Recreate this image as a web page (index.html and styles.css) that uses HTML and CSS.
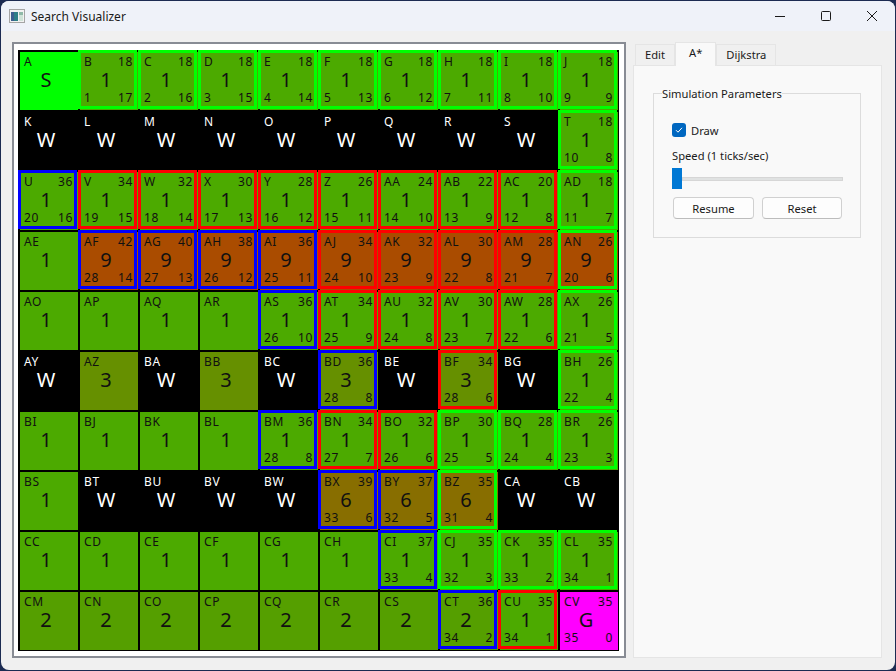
FILE: index.html
```html
<!DOCTYPE html>
<html lang="en">

<head>
    <meta charset="UTF-8">
    <meta name="viewport" content="width=device-width, initial-scale=1.0">
    <title>Search Visualizer</title>
    <link rel="stylesheet" href="styles.css">
</head>

<body>
    <div class="window">
        <div class="titlebar">
            <svg class="app-icon" width="16" height="14" viewBox="0 0 16 14">
                <rect x="0.5" y="0.5" width="15" height="13" fill="#f2f2f2" stroke="#a5a5a5" />
                <rect x="2" y="3" width="7" height="9" fill="#2f7f86" />
                <rect x="2" y="3" width="3" height="9" fill="#3c5f8f" />
                <rect x="10" y="3" width="4" height="9" fill="#cfe3d8" />
                <rect x="10" y="3" width="4" height="3" fill="#8fb9a8" />
            </svg>
            <span class="title">Search Visualizer</span>
            <div class="controls">
                <svg width="46" height="30" viewBox="0 0 46 30">
                    <path d="M18 15.5h10" stroke="#1a1a1a" fill="none" />
                </svg>
                <svg width="46" height="30" viewBox="0 0 46 30">
                    <rect x="18.5" y="10.5" width="9" height="9" rx="1" stroke="#1a1a1a" fill="none" />
                </svg>
                <svg width="46" height="30" viewBox="0 0 46 30">
                    <path d="M18 10l10 10M28 10l-10 10" stroke="#1a1a1a" fill="none" />
                </svg>
            </div>
        </div>

        <div class="content">
            <div class="board-frame">
                <div class="board" id="board">
                    <!-- Cells will be rendered here -->
                </div>
            </div>

            <div class="side">
                <div class="tabs">
                    <div class="tab">Edit</div>
                    <div class="tab active">A*</div>
                    <div class="tab">Dijkstra</div>
                </div>
                <div class="pane">
                    <div class="group">
                        <div class="group-title">Simulation Parameters</div>
                        <div class="check-row">
                            <svg class="check" width="14" height="14" viewBox="0 0 14 14">
                                <rect width="14" height="14" rx="3" fill="#0067c0" />
                                <path d="M4 7.2l2 2 4-4.4" stroke="#fff" fill="none" />
                            </svg>
                            <span>Draw</span>
                        </div>
                        <div class="speed">Speed (1 ticks/sec)</div>
                        <div class="slider">
                            <div class="handle"></div>
                            <div class="track"></div>
                        </div>
                        <div class="buttons">
                            <button class="btn resume">Resume</button>
                            <button class="btn reset">Reset</button>
                        </div>
                    </div>
                </div>
            </div>
        </div>
    </div>
    <script src="script.js"></script>
</body>

</html>
```

FILE: styles.css
```css
* {
    box-sizing: border-box;
    margin: 0;
    padding: 0;
}

body {
    width: 896px;
    height: 671px;
    padding: 1px;
    overflow: hidden;
    font-family: "Noto Sans", "Open Sans", sans-serif;
    font-size: 12px;
    color: #1a1a1a;
    background-color: #1c2b52;
}

.window {
    height: 669px;
    display: flex;
    flex-direction: column;
    border-radius: 8px;
    overflow: hidden;
    background-color: #f0f0f0;
}

/* Title bar */
.titlebar {
    height: 30px;
    flex: none;
    display: flex;
    align-items: center;
    padding-left: 8px;
    background-color: #eff2f9;
}

.app-icon {
    margin-right: 6px;
}

.controls {
    margin-left: auto;
    display: flex;
    gap: 0;
}

/* Board */
.content {
    flex: 1;
    display: flex;
    align-items: flex-start;
    gap: 7px;
    padding: 11px 13px 0 11px;
}

.board-frame {
    width: 614px;
    height: 616px;
    padding: 6px 4px;
    background-color: #fff;
    border: 2px solid #888c94;
}

.board {
    width: 601px;
    height: 601px;
    display: grid;
    grid-template-columns: repeat(10, 58px);
    grid-template-rows: repeat(10, 58px);
    gap: 2px;
    padding: 2px 1px 1px 2px;
    background-color: #000;
}

.cell {
    position: relative;
    display: flex;
    flex-direction: column;
    padding: 2px 5px 5px 4px;
    color: #111;
    line-height: 16px;
}

.cell-row {
    height: 16px;
    display: flex;
    justify-content: space-between;
    letter-spacing: 0.6px;
}

.cell-value {
    flex: 1;
    padding-right: 5px;
    text-align: center;
    font-size: 20px;
    line-height: 20px;
}

.cost-1 { background-color: #4caa00; }
.cost-2 { background-color: #559f00; }
.cost-3 { background-color: #669000; }
.cost-6 { background-color: #886e00; }
.cost-9 { background-color: #aa4c00; }

.start { background-color: #00ff00; }
.goal { background-color: #ff00ff; }

.wall {
    background-color: #000;
    color: #fff;
}

/* Search state, drawn over the grid lines */
.open::after,
.closed::after,
.current::after {
    content: "";
    position: absolute;
    left: -2px;
    top: -2px;
    right: 1px;
    bottom: 1px;
    border: 3px solid;
}

.open::after { border-color: #00ff00; }
.closed::after { border-color: #ff0000; }
.current::after { border-color: #0000ff; }

/* Side panel */
.side {
    width: 249px;
    font-size: 11.2px;
}

.tabs {
    height: 23px;
    display: flex;
    align-items: flex-end;
    padding-left: 2px;
}

.tab {
    height: 21px;
    padding: 0 9px;
    line-height: 20px;
    background-color: #f0f0f0;
    border: 1px solid #e5e5e5;
    border-bottom: none;
}

.tab.active {
    height: 24px;
    margin-bottom: -1px;
    padding: 0 13px;
    position: relative;
    background-color: #f9f9f9;
}

.pane {
    height: 593px;
    padding: 27px 20px 0 19px;
    background-color: #f9f9f9;
    border: 1px solid #e5e5e5;
}

.group {
    height: 145px;
    padding: 23px 18px 0 18px;
    position: relative;
    border: 1px solid #dcdcdc;
}

.group-title {
    position: absolute;
    left: 8px;
    top: -8px;
    padding: 0;
    line-height: 16px;
    background-color: #f9f9f9;
}

.check-row {
    height: 24px;
    display: flex;
    align-items: center;
    gap: 5px;
    margin-top: 1px;
}

.speed {
    margin-top: 5px;
    line-height: 18px;
}

.slider {
    height: 21px;
    margin-top: 3px;
    display: flex;
    align-items: center;
    width: 171px;
}

.handle {
    width: 10px;
    height: 21px;
    background-color: #0078d4;
}

.track {
    flex: 1;
    height: 4px;
    background-color: #e0e2e2;
    border: 1px solid #d6d6d6;
}

.buttons {
    display: flex;
    gap: 8px;
    margin-top: 8px;
    margin-left: 1px;
}

.btn {
    height: 22px;
    font-family: inherit;
    font-size: 11.2px;
    color: #1a1a1a;
    background-color: #fdfdfd;
    border: 1px solid #d0d0d0;
    border-bottom-color: #bcbcbc;
    border-radius: 4px;
}

.resume {
    width: 81px;
}

.reset {
    width: 80px;
}
```

FILE: script.js
```js
// name, value, state, f, g, h  (state: o = open, c = closed, b = current)
const CELLS = [
    'A S s', 'B 1 o 18 1 17', 'C 1 o 18 2 16', 'D 1 o 18 3 15', 'E 1 o 18 4 14', 'F 1 o 18 5 13', 'G 1 o 18 6 12', 'H 1 o 18 7 11', 'I 1 o 18 8 10', 'J 1 o 18 9 9',
    'K W', 'L W', 'M W', 'N W', 'O W', 'P W', 'Q W', 'R W', 'S W', 'T 1 o 18 10 8',
    'U 1 b 36 20 16', 'V 1 c 34 19 15', 'W 1 c 32 18 14', 'X 1 c 30 17 13', 'Y 1 c 28 16 12', 'Z 1 c 26 15 11', 'AA 1 c 24 14 10', 'AB 1 c 22 13 9', 'AC 1 c 20 12 8', 'AD 1 o 18 11 7',
    'AE 1', 'AF 9 b 42 28 14', 'AG 9 b 40 27 13', 'AH 9 b 38 26 12', 'AI 9 b 36 25 11', 'AJ 9 c 34 24 10', 'AK 9 c 32 23 9', 'AL 9 c 30 22 8', 'AM 9 c 28 21 7', 'AN 9 o 26 20 6',
    'AO 1', 'AP 1', 'AQ 1', 'AR 1', 'AS 1 b 36 26 10', 'AT 1 c 34 25 9', 'AU 1 c 32 24 8', 'AV 1 c 30 23 7', 'AW 1 c 28 22 6', 'AX 1 o 26 21 5',
    'AY W', 'AZ 3', 'BA W', 'BB 3', 'BC W', 'BD 3 b 36 28 8', 'BE W', 'BF 3 c 34 28 6', 'BG W', 'BH 1 o 26 22 4',
    'BI 1', 'BJ 1', 'BK 1', 'BL 1', 'BM 1 b 36 28 8', 'BN 1 c 34 27 7', 'BO 1 c 32 26 6', 'BP 1 o 30 25 5', 'BQ 1 o 28 24 4', 'BR 1 o 26 23 3',
    'BS 1', 'BT W', 'BU W', 'BV W', 'BW W', 'BX 6 b 39 33 6', 'BY 6 b 37 32 5', 'BZ 6 o 35 31 4', 'CA W', 'CB W',
    'CC 1', 'CD 1', 'CE 1', 'CF 1', 'CG 1', 'CH 1', 'CI 1 b 37 33 4', 'CJ 1 o 35 32 3', 'CK 1 o 35 33 2', 'CL 1 o 35 34 1',
    'CM 2', 'CN 2', 'CO 2', 'CP 2', 'CQ 2', 'CR 2', 'CS 2', 'CT 2 b 36 34 2', 'CU 1 c 35 34 1', 'CV G g 35 35 0'
];

const STATES = { o: 'open', c: 'closed', b: 'current', s: 'start', g: 'goal' };

let board = document.getElementById('board');

CELLS.forEach((item) => {
    const [name, value, state, f = '', g = '', h = ''] = item.split(' ');
    const cell = document.createElement('div');

    cell.className = 'cell';
    if (value === 'W') {
        cell.classList.add('wall');
    } else if (value !== 'S' && value !== 'G') {
        cell.classList.add('cost-' + value);
    }
    if (state) {
        cell.classList.add(STATES[state]);
    }

    cell.innerHTML = `
        <div class="cell-row"><span>${name}</span><span>${f}</span></div>
        <div class="cell-value">${value}</div>
        <div class="cell-row"><span>${g}</span><span>${h}</span></div>
    `;
    board.appendChild(cell);
});
```
